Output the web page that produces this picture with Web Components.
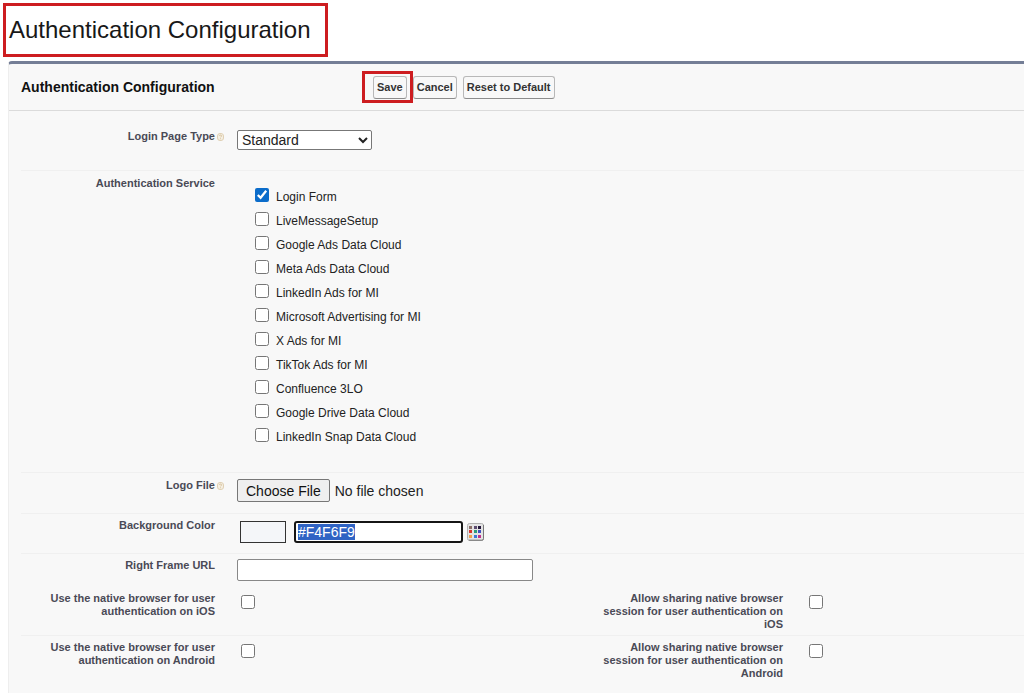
<!DOCTYPE html>
<html lang="en">
<head>
<meta charset="utf-8">
<meta name="viewport" content="width=device-width, initial-scale=1">
<title>Authentication Configuration</title>
<style>
  html { background: #fff; }
  body { margin: 0; font-family: "Liberation Sans", Arial, sans-serif; color: #222; }
</style>
</head>
<body>
<auth-settings></auth-settings>

<template id="page-title-t">
  <style>
    :host { display: flex; padding: 3px 3px 4px; }
    h1 { margin: 0; padding: 0 14px 0 3px; border: 3px solid #cd1d20; font-size: 24px; line-height: 48px; font-weight: 400; color: #181818; }
  </style>
  <h1><slot></slot></h1>
</template>

<template id="edit-panel-t">
  <style>
    :host { display: block; margin-left: 8px; background: #f8f8f8; border-top: 3px solid #747e96; border-left: 1px solid #eee; border-radius: 4px 0 0 0; }
    header { display: grid; grid-template-columns: 352px 1fr; align-items: center; height: 46px; padding-left: 12px; border-bottom: 1px solid #dbdbdb; }
    h2 { margin: 0; font-size: 14px; line-height: 18px; font-weight: 700; color: #111; }
    .actions { display: flex; gap: 6px; }
    .rows { padding-left: 12px; }
  </style>
  <header><h2><slot name="heading"></slot></h2><div class="actions"><slot name="actions"></slot></div></header>
  <div class="rows"><slot></slot></div>
</template>

<template id="action-button-t">
  <style>
    :host { display: block; position: relative; }
    button { display: block; height: 23px; padding: 0 3px; border: 1px solid #b8b8b8; border-bottom-color: #8c8c8c; border-radius: 3px; background: #f8f8f8; font: 700 11px/21px "Liberation Sans", Arial, sans-serif; color: #333; white-space: nowrap; }
    :host([highlighted])::after { content: ""; position: absolute; z-index: 1; inset: -5px -6px -4px -11px; border: 3px solid #cd1d20; pointer-events: none; }
  </style>
  <button type="button"><slot></slot></button>
</template>

<template id="form-row-t">
  <style>
    :host { display: grid; grid-template-columns: 194px 22px minmax(0, 364fr) 182px 22px minmax(0, 219fr); align-items: start; box-sizing: border-box; padding-top: 6px; border-bottom: 1px solid #f0f0f0; }
    .label { font-size: 11px; line-height: 13px; font-weight: 700; color: #4a4a56; text-align: right; }
    .help { padding: 3px 0 0 2px; line-height: 0; }
  </style>
  <div class="label"><slot name="label"></slot></div>
  <div class="help"><slot name="help"></slot></div>
  <div class="value"><slot></slot></div>
  <div class="label"><slot name="label2"></slot></div>
  <div></div>
  <div><slot name="value2"></slot></div>
</template>

<template id="help-mark-t">
  <style>:host { display: block; } svg { display: block; }</style>
  <svg width="7" height="8" viewBox="0 0 7 8" aria-hidden="true"><rect x=".5" y=".5" width="6" height="7" rx="2.5" fill="#f5efe2" stroke="#dfd0b4"/><path d="M2.5 3q0-1 1-1t1 1q0 .7-1 1.2M3.5 5.3v.9" fill="none" stroke="#d0b98f" stroke-width=".8"/></svg>
</template>

<template id="check-option-t">
  <style>
    :host { display: block; }
    label { display: flex; align-items: flex-start; gap: 7px; height: 24px; font-size: 12px; line-height: 18px; color: #222; white-space: nowrap; }
    :host([bare]) label { height: 16px; }
    input { width: 14px; height: 14px; margin: 0; accent-color: #0b6cca; }
    :host([bare]) span { display: none; }
  </style>
  <label><input type="checkbox"><span><slot></slot></span></label>
</template>

<template id="color-field-t">
  <style>
    :host { display: flex; align-items: center; gap: 8px; padding: 2px 0 0 3px; }
    .swatch { box-sizing: border-box; width: 46px; height: 22px; border: 1px solid #333; background: #f4f6f9; }
    input { box-sizing: border-box; width: 169px; height: 22px; padding: 0 2px; border: 2px solid #151515; border-radius: 3px; outline: 0; background: #fff; font: 14px/18px "Liberation Sans", Arial, sans-serif; color: #222; }
    input::selection { background: #2f63c4; color: #fff; }
    button { width: 17px; height: 18px; margin-left: -4px; padding: 0; border: 0; background: none; }
    svg { display: block; }
  </style>
  <span class="swatch"></span>
  <input type="text" value="#F4F6F9" aria-label="Background Color">
  <button type="button" aria-label="Pick a color"><svg width="17" height="18" viewBox="0 0 17 18">
    <rect x=".5" y=".5" width="16" height="17" rx="2" fill="#e4e4e4" stroke="#b0b0b0"/><path d="M2 17.2h13q1.5 0 1.5-1.5V2" fill="none" stroke="#777"/>
    <path fill="#8b6d67" d="M2 3h3v3H2z"/><path fill="#5b4b70" d="M7 3h3v3H7z"/><path fill="#24173b" d="M11 3h3v3h-3z"/>
    <path fill="#d9322b" d="M2 7h3v3H2z"/><path fill="#2c9c7a" d="M7 7h3v3H7z"/><path fill="#3f4fc0" d="M11 7h3v3h-3z"/>
    <path fill="#f0a050" d="M2 12h3v3H2z"/><path fill="#3b78d8" d="M7 12h3v3H7z"/><path fill="#c0308c" d="M11 12h3v3h-3z"/>
  </svg></button>
</template>

<template id="auth-settings-t">
  <style>
    :host { display: block; min-height: 100vh; }
    edit-panel { min-height: calc(100vh - 64px); }
    select { display: block; box-sizing: border-box; width: 135px; height: 20px; padding: 0; border: 1px solid #777; border-radius: 2px; background: #fff; font: 14px "Liberation Sans", Arial, sans-serif; color: #222; }
    input[type=file] { display: block; width: 100%; font: 14px/22px "Liberation Sans", Arial, sans-serif; color: #222; }
    input[type=file]::file-selector-button { box-sizing: border-box; height: 23px; margin: 0 5px 0 0; padding: 0 8px; border: 1px solid #777; border-radius: 2px; background: #efefef; font: 14px "Liberation Sans", Arial, sans-serif; color: #111; }
    input[type=text] { display: block; box-sizing: border-box; width: 296px; max-width: 100%; height: 22px; border: 1px solid #888; border-radius: 2px; background: #fff; font: 14px "Liberation Sans", Arial, sans-serif; }
    check-option[bare] { padding: 3px 0 0 4px; }
    .services { padding: 11px 0 0 18px; }
    .type { padding-top: 19px; min-height: 60px; }
    .service { min-height: 302px; }
    .file { min-height: 41px; }
    .color { min-height: 40px; padding-top: 5px; }
    .url { min-height: 33px; padding-top: 5px; border-bottom-color: transparent; }
    .pair { min-height: 49px; padding-top: 5px; }
    .pair:last-child { border-bottom: 0; }
  </style>
  <page-title>Authentication Configuration</page-title>
  <edit-panel>
    <span slot="heading">Authentication Configuration</span>
    <action-button slot="actions" highlighted>Save</action-button>
    <action-button slot="actions">Cancel</action-button>
    <action-button slot="actions">Reset to Default</action-button>

    <form-row class="type">
      <label slot="label" for="type">Login Page Type</label><help-mark slot="help"></help-mark>
      <select id="type"><option>Standard</option></select>
    </form-row>
    <form-row class="service">
      <span slot="label">Authentication Service</span>
      <div class="services" role="group" aria-label="Authentication Service">
        <check-option checked>Login Form</check-option>
        <check-option>LiveMessageSetup</check-option>
        <check-option>Google Ads Data Cloud</check-option>
        <check-option>Meta Ads Data Cloud</check-option>
        <check-option>LinkedIn Ads for MI</check-option>
        <check-option>Microsoft Advertising for MI</check-option>
        <check-option>X Ads for MI</check-option>
        <check-option>TikTok Ads for MI</check-option>
        <check-option>Confluence 3LO</check-option>
        <check-option>Google Drive Data Cloud</check-option>
        <check-option>LinkedIn Snap Data Cloud</check-option>
      </div>
    </form-row>
    <form-row class="file">
      <label slot="label" for="logo">Logo File</label><help-mark slot="help"></help-mark>
      <input id="logo" type="file">
    </form-row>
    <form-row class="color">
      <label slot="label" for="color">Background Color</label>
      <color-field id="color"></color-field>
    </form-row>
    <form-row class="url">
      <label slot="label" for="url">Right Frame URL</label>
      <input id="url" type="text">
    </form-row>
    <form-row class="pair">
      <label slot="label" for="ios">Use the native browser for user authentication on iOS</label>
      <check-option bare id="ios" label="Use the native browser for user authentication on iOS"></check-option>
      <label slot="label2" for="ios2">Allow sharing native browser session for user authentication on iOS</label>
      <check-option bare id="ios2" slot="value2" label="Allow sharing native browser session for user authentication on iOS"></check-option>
    </form-row>
    <form-row class="pair">
      <label slot="label" for="android">Use the native browser for user authentication on Android</label>
      <check-option bare id="android" label="Use the native browser for user authentication on Android"></check-option>
      <label slot="label2" for="android2">Allow sharing native browser session for user authentication on Android</label>
      <check-option bare id="android2" slot="value2" label="Allow sharing native browser session for user authentication on Android"></check-option>
    </form-row>
  </edit-panel>
</template>

<script>
  class TemplateElement extends HTMLElement {
    constructor(options = {}) {
      super();
      this.attachShadow({ mode: "open", ...options });
      this.shadowRoot.append(document.getElementById(this.localName + "-t").content.cloneNode(true));
    }
  }
  class FieldElement extends TemplateElement {
    static formAssociated = true;
    constructor() { super({ delegatesFocus: true }); }
  }
  customElements.define("page-title", class extends TemplateElement {});
  customElements.define("edit-panel", class extends TemplateElement {});
  customElements.define("action-button", class extends TemplateElement {});
  customElements.define("form-row", class extends TemplateElement {});
  customElements.define("help-mark", class extends TemplateElement {});
  customElements.define("check-option", class extends FieldElement {
    connectedCallback() {
      const box = this.shadowRoot.querySelector("input");
      box.checked = this.hasAttribute("checked");
      if (this.hasAttribute("label")) box.setAttribute("aria-label", this.getAttribute("label"));
    }
  });
  customElements.define("color-field", class extends FieldElement {
    connectedCallback() {
      const field = this.shadowRoot.querySelector("input");
      const swatch = this.shadowRoot.querySelector(".swatch");
      field.addEventListener("input", () => { swatch.style.background = field.value; });
    }
  });
  customElements.define("auth-settings", class extends TemplateElement {
    connectedCallback() {
      const field = this.shadowRoot.querySelector("color-field").shadowRoot.querySelector("input");
      field.focus();
      field.select();
    }
  });
</script>
</body>
</html>
